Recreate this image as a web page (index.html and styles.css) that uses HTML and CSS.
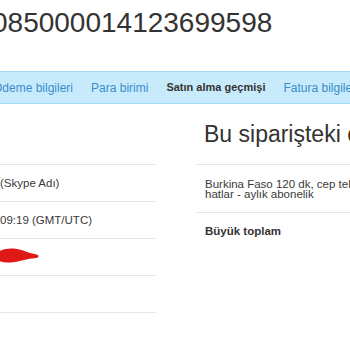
FILE: index.html
```html
<!DOCTYPE html>
<html lang="tr">
<head>
<meta charset="utf-8">
<title>Sipariş</title>
<link rel="stylesheet" href="styles.css">
</head>
<body>
<div class="page">
  <h1 class="order-id">085000014123699598</h1>
  <nav class="tabbar">
    <ul class="tabs">
      <li class="tab">Ödeme bilgileri</li>
      <li class="tab">Para birimi</li>
      <li class="tab tab-active">Satın alma geçmişi</li>
      <li class="tab">Fatura bilgileri</li>
    </ul>
  </nav>
  <div class="content">
    <section class="details">
      <div class="col-head"></div>
      <div class="row">(Skype Adı)</div>
      <div class="row">09:19 (GMT/UTC)</div>
      <div class="row">
        <svg class="redact" width="40" height="16" viewBox="0 0 40 16">
          <path d="M0 3 C5 0.5 11 0 17 1 C22 2 26 3.5 30 5 C33 6 38 6 38.5 8 C39 10 35 10.2 31 10.5 C25 11.3 19 14 11 14.4 C6 14.6 2 14 0 13.2 Z" fill="#e01818"/>
        </svg>
      </div>
      <div class="row"></div>
    </section>
    <section class="summary">
      <h2 class="col-head summary-title">Bu siparişteki öğeler</h2>
      <div class="item">Burkina Faso 120 dk, cep telefonları ve sabit<br>hatlar - aylık abonelik</div>
      <div class="total">Büyük toplam</div>
    </section>
  </div>
</div>
</body>
</html>
```

FILE: styles.css
```css
html, body {
  margin: 0;
  padding: 0;
  background: #ffffff;
  overflow: hidden;
}

.page {
  width: 350px;
  height: 350px;
  overflow: hidden;
  font-family: "Liberation Sans", Arial, sans-serif;
  color: #333333;
}

.order-id {
  margin: 7px 0 0 -8px;
  font-size: 28px;
  line-height: 32px;
  font-weight: normal;
  color: #333333;
  white-space: nowrap;
}

.tabbar {
  margin-top: 32px;
  height: 31px;
  background: #c8ebfb;
  border-top: 1px solid #a4d9f3;
  border-bottom: 1px solid #a4d9f3;
  display: flex;
  align-items: center;
  overflow: hidden;
}

.tabs {
  list-style: none;
  margin: 0 0 0 -7px;
  padding: 0;
  display: flex;
  gap: 18px;
  white-space: nowrap;
}

.tab {
  font-size: 12px;
  color: #3b8ccd;
}

.tab-active {
  font-size: 11px;
  font-weight: bold;
  color: #333333;
}

.content {
  display: grid;
  grid-template-columns: 156px 260px;
  column-gap: 41px;
}

.col-head {
  height: 60px;
  border-bottom: 1px solid #e6e6e6;
  box-sizing: content-box;
}

.row {
  height: 36px;
  border-bottom: 1px solid #e6e6e6;
  display: flex;
  align-items: center;
  font-size: 11.5px;
  color: #3a3a3a;
  white-space: nowrap;
}

.redact {
  display: block;
  margin-top: -3px;
}

.summary-title {
  margin: 0;
  height: 44px;
  padding: 16px 0 0 7px;
  font-size: 23px;
  line-height: 28px;
  font-weight: normal;
  color: #333333;
  white-space: nowrap;
}

.item {
  height: 47px;
  border-bottom: 1px solid #e6e6e6;
  display: flex;
  align-items: center;
  padding-left: 8px;
  font-size: 11.5px;
  line-height: 10px;
  color: #3a3a3a;
  white-space: nowrap;
}

.total {
  height: 36px;
  display: flex;
  align-items: center;
  padding-left: 8px;
  font-size: 11.5px;
  font-weight: bold;
  color: #333333;
}
```
